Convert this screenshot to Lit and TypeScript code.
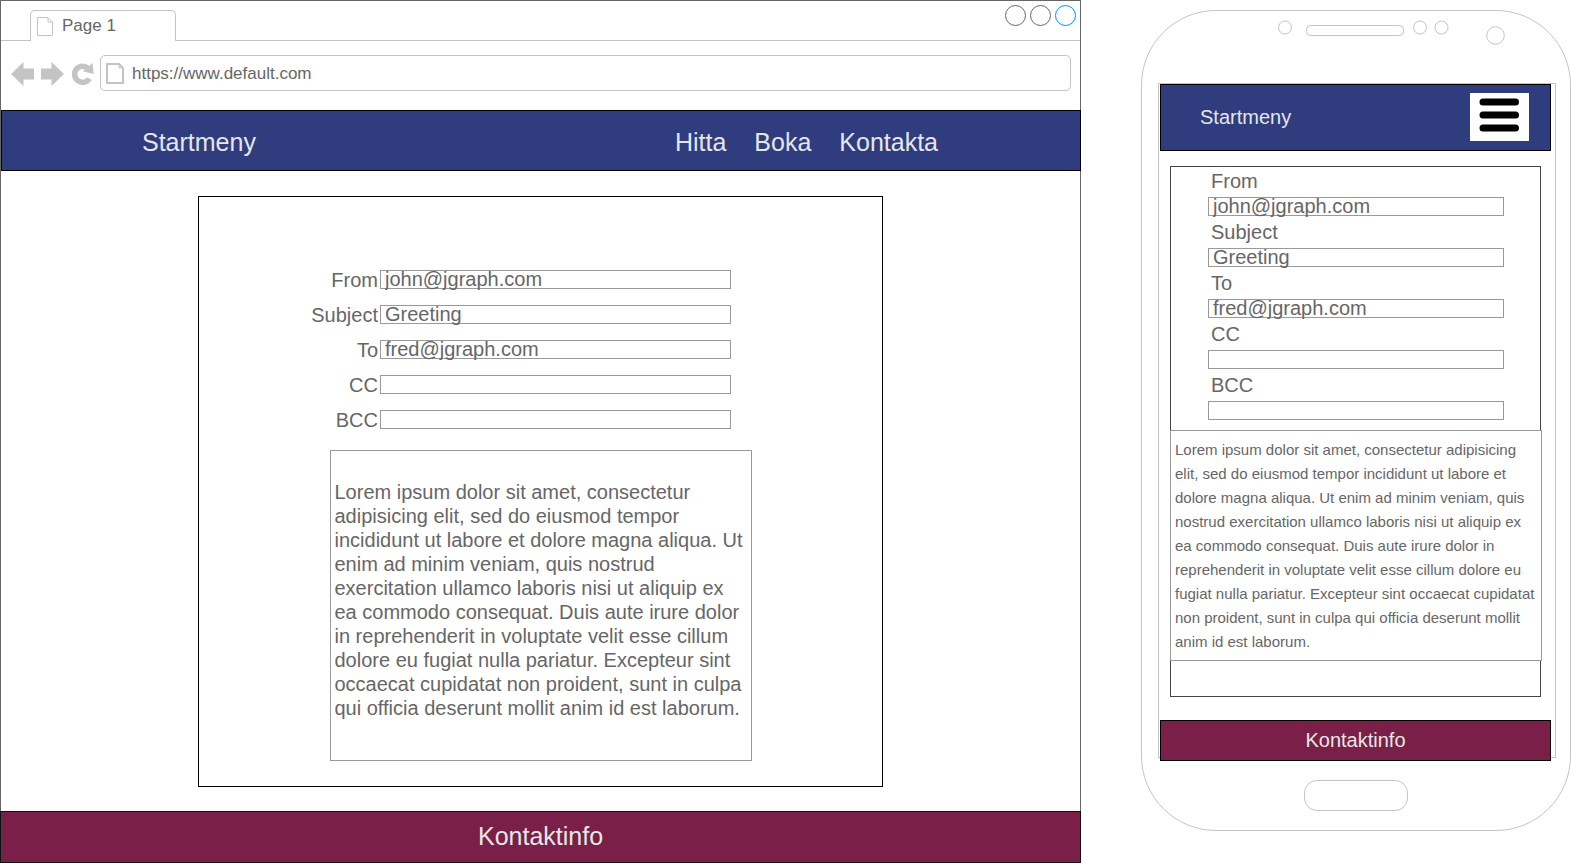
import { LitElement, html, svg, css } from "lit";
import { customElement, property } from "lit/decorators.js";

const MESSAGE =
  "Lorem ipsum dolor sit amet, consectetur adipisicing elit, sed do eiusmod tempor incididunt ut labore et dolore magna aliqua. Ut enim ad minim veniam, quis nostrud exercitation ullamco laboris nisi ut aliquip ex ea commodo consequat. Duis aute irure dolor in reprehenderit in voluptate velit esse cillum dolore eu fugiat nulla pariatur. Excepteur sint occaecat cupidatat non proident, sunt in culpa qui officia deserunt mollit anim id est laborum.";

const FIELDS = [
  { id: "from", label: "From", value: "john@jgraph.com" },
  { id: "subject", label: "Subject", value: "Greeting" },
  { id: "to", label: "To", value: "fred@jgraph.com" },
  { id: "cc", label: "CC", value: "" },
  { id: "bcc", label: "BCC", value: "" },
];

const LINKS = ["Hitta", "Boka", "Kontakta"];

const base = css`
  :host,
  * {
    box-sizing: border-box;
  }
  button,
  input,
  textarea {
    font: inherit;
    color: inherit;
    background: none;
    border: 0;
    border-radius: 0;
    margin: 0;
    padding: 0;
    outline: none;
  }
  button {
    cursor: pointer;
  }
  a {
    color: inherit;
    text-decoration: none;
  }
  svg {
    display: block;
  }
`;

const pageIcon = (w: number, h: number, stroke: number) => html`
  <svg width=${w} height=${h} viewBox="0 0 ${w} ${h}" fill="none" stroke="#c4c4c4" stroke-width=${stroke} aria-hidden="true">
    ${svg`<path d="M${stroke / 2} ${stroke / 2}H${w - 5}L${w - stroke / 2} 5V${h - stroke / 2}H${stroke / 2}Z"/>
    <path stroke-width="1" d="M${w - 5} 1V5H${w - 1}"/>`}
  </svg>
`;

@customElement("mail-form")
export class MailForm extends LitElement {
  @property({ type: Boolean, reflect: true }) compact = false;

  static styles = [
    base,
    css`
      :host {
        display: block;
        border: 1px solid #000;
        background: #fff;
        color: #666;
        font-size: 20px;
        line-height: 24px;
        padding: 73px 0 25px;
      }
      .fields {
        display: grid;
        gap: 16px;
      }
      .row {
        display: grid;
        grid-template-columns: 179px minmax(0, 351px);
        grid-template-rows: 19px;
        column-gap: 2px;
        align-items: center;
      }
      .label {
        text-align: right;
      }
      .box {
        display: flex;
        align-items: center;
        height: 19px;
        border: 1px solid #999;
      }
      .input {
        flex: 1;
        min-width: 0;
        height: 25px;
        padding: 0 4px;
      }
      .message {
        display: block;
        width: 422px;
        max-width: 100%;
        margin: 21px auto 0;
        padding: 29px 3px 40px 4px;
        border: 1px solid #999;
        background: #fff;
        resize: none;
        overflow: hidden;
      }
      :host([compact]) {
        padding: 2px 0 35px;
        border-color: #444;
      }
      :host([compact]) .fields {
        gap: 4px;
        margin: 0 36px 0 37px;
      }
      :host([compact]) .row {
        grid-template-columns: minmax(0, 1fr);
        grid-template-rows: 24px 19px;
        row-gap: 4px;
      }
      :host([compact]) .label {
        text-align: left;
        padding-left: 3px;
      }
      :host([compact]) .message {
        width: calc(100% + 3px);
        max-width: none;
        margin: 10px -2px 0 -1px;
        padding: 7px 3px 6px 4px;
        font-size: 15px;
      }
    `,
  ];

  render() {
    return html`
      <div class="fields">
        ${FIELDS.map(
          (f) => html`<div class="row">
            <label class="label" for=${f.id}>${f.label}</label>
            <div class="box"><input class="input" id=${f.id} type="text" .value=${f.value} /></div>
          </div>`
        )}
      </div>
      <textarea class="message" aria-label="Message" rows=${this.compact ? 9 : 10} .value=${MESSAGE}></textarea>
    `;
  }
}

@customElement("browser-mockup")
export class BrowserMockup extends LitElement {
  static styles = [
    base,
    css`
      :host {
        display: block;
        border: 1px solid #666;
        border-bottom: 0;
        background: #fff;
        color: #666;
        font-size: 17px;
      }
      .strip {
        display: flex;
        justify-content: space-between;
        align-items: flex-start;
        height: 40px;
        padding: 0 4px 0 29px;
        border-bottom: 1px solid #c4c4c4;
      }
      .tab {
        display: flex;
        align-items: center;
        gap: 9px;
        width: 146px;
        height: 31px;
        margin-top: 9px;
        padding: 0 6px;
        border: 1px solid #c4c4c4;
        border-bottom: 0;
        border-radius: 5px 5px 0 0;
        background: #fff;
      }
      .controls {
        display: flex;
        gap: 4px;
        margin-top: 4px;
      }
      .dot {
        width: 21px;
        height: 21px;
        border: 1px solid #666;
        border-radius: 50%;
      }
      .active {
        border-color: #008cff;
      }
      .toolbar {
        display: flex;
        align-items: center;
        gap: 6px;
        padding: 14px 9px 19px 10px;
      }
      .tools {
        display: flex;
        gap: 7px;
        padding-top: 2px;
      }
      .address {
        display: flex;
        flex: 1;
        align-items: center;
        gap: 8px;
        height: 36px;
        padding: 1px 5px 0;
        border: 1px solid #c4c4c4;
        border-radius: 5px;
      }
      .url {
        flex: 1;
        min-width: 0;
        height: 24px;
      }
      .menu {
        display: flex;
        align-items: center;
        justify-content: space-between;
        height: 61px;
        margin-right: -1px;
        padding: 3px 142px 0 140px;
        border: 1px solid #000;
        background: #2f3c7e;
        color: #e6e6e6;
        font-size: 25px;
      }
      .links {
        display: flex;
        gap: 28px;
      }
      .card {
        max-width: 685px;
        margin: 25px auto 24px;
      }
      .footer {
        display: flex;
        align-items: center;
        justify-content: center;
        height: 52px;
        margin: 0 -1px;
        padding-bottom: 2px;
        border: 1px solid #111;
        background: #7a1f47;
        color: #e6e6e6;
        font-size: 25px;
      }
    `,
  ];

  render() {
    return html`
      <div class="strip">
        <button class="tab">${pageIcon(16, 19, 1)}<span>Page 1</span></button>
        <div class="controls">
          <button class="dot" aria-label="Minimize"></button>
          <button class="dot" aria-label="Maximize"></button>
          <button class="dot active" aria-label="Close"></button>
        </div>
      </div>
      <div class="toolbar">
        <div class="tools">
          <button aria-label="Back">
            <svg width="23" height="24" viewBox="0 0 23 24" fill="#c4c4c4"><path d="M0 12 12.500 0V6.500H23V17.500H12.500V24Z" /></svg>
          </button>
          <button aria-label="Forward">
            <svg width="23" height="24" viewBox="0 0 23 24" fill="#c4c4c4"><path d="M23 12 10.500 0V6.500H0V17.500H10.500V24Z" /></svg>
          </button>
          <button aria-label="Reload">
            <svg width="23" height="24" viewBox="0 0 23 24">
              <path d="M18.400 16.600A8 8 0 1 1 17 6.400" fill="none" stroke="#c4c4c4" stroke-width="5.500" />
              <path d="M21.500 1 22.800 12 11.700 9.300Z" fill="#c4c4c4" />
            </svg>
          </button>
        </div>
        <div class="address">
          ${pageIcon(18, 21, 2)}
          <input class="url" type="text" aria-label="Address" .value=${"https://www.default.com"} />
        </div>
      </div>
      <nav class="menu">
        <a href="#start">Startmeny</a>
        <div class="links">${LINKS.map((l) => html`<a href="#${l.toLowerCase()}">${l}</a>`)}</div>
      </nav>
      <mail-form class="card"></mail-form>
      <footer class="footer">Kontaktinfo</footer>
    `;
  }
}

@customElement("phone-mockup")
export class PhoneMockup extends LitElement {
  static styles = [
    base,
    css`
      :host {
        display: block;
        border: 1px solid #c4c4c4;
        border-radius: 75px;
        background: #fff;
        font-size: 20px;
      }
      .hardware {
        margin: 0 auto;
        overflow: visible;
      }
      .screen {
        margin: 0 14px 0 16px;
        border: 1px solid #c4c4c4;
      }
      .menu {
        display: flex;
        align-items: center;
        justify-content: space-between;
        height: 67px;
        margin: 0 4px 0 1px;
        padding: 0 21px 1px 39px;
        border: 1px solid #000;
        background: #2f3c7e;
        color: #e6e6e6;
      }
      .burger {
        background: #fff;
      }
      .card {
        margin: 15px 14px 23px 11px;
      }
      .footer {
        display: flex;
        align-items: center;
        justify-content: center;
        height: 41px;
        margin: 0 4px -4px 1px;
        border: 1px solid #000;
        background: #7a1f47;
        color: #e6e6e6;
        position: relative;
      }
      .home {
        display: block;
        width: 104px;
        height: 31px;
        margin: 22px auto 19px;
        border: 1px solid #c4c4c4;
        border-radius: 13px;
      }
    `,
  ];

  render() {
    return html`
      <svg class="hardware" width="428" height="72" viewBox="0 0 428 72" fill="none" stroke="#c4c4c4" aria-hidden="true">
        <circle cx="143" cy="16.500" r="6.500" />
        <rect x="164.500" y="14.500" width="97" height="10" rx="4" />
        <circle cx="278" cy="16.500" r="6.500" />
        <circle cx="299.500" cy="16.500" r="6.500" />
        <circle cx="353.500" cy="24.500" r="8.800" />
      </svg>
      <div class="screen">
        <nav class="menu">
          <a href="#start">Startmeny</a>
          <button class="burger" aria-label="Menu">
            <svg width="59" height="48" viewBox="0 0 59 48" stroke="#000" stroke-width="7" stroke-linecap="round">
              <path d="M13 9H45.500M13 22H45.500M13 35H45.500" />
            </svg>
          </button>
        </nav>
        <mail-form class="card" compact></mail-form>
        <footer class="footer">Kontaktinfo</footer>
      </div>
      <button class="home" aria-label="Home"></button>
    `;
  }
}

@customElement("app-root")
export class AppRoot extends LitElement {
  static styles = css`
    :host {
      display: flex;
      align-items: flex-start;
      gap: 60px;
      background: #fff;
      font-family: "Liberation Sans", Helvetica, Arial, sans-serif;
    }
    .desktop {
      flex: 1;
      min-width: 0;
    }
    .phone {
      flex: 0 0 430px;
      margin-top: 10px;
    }
  `;

  render() {
    return html`
      <browser-mockup class="desktop"></browser-mockup>
      <phone-mockup class="phone"></phone-mockup>
    `;
  }
}
